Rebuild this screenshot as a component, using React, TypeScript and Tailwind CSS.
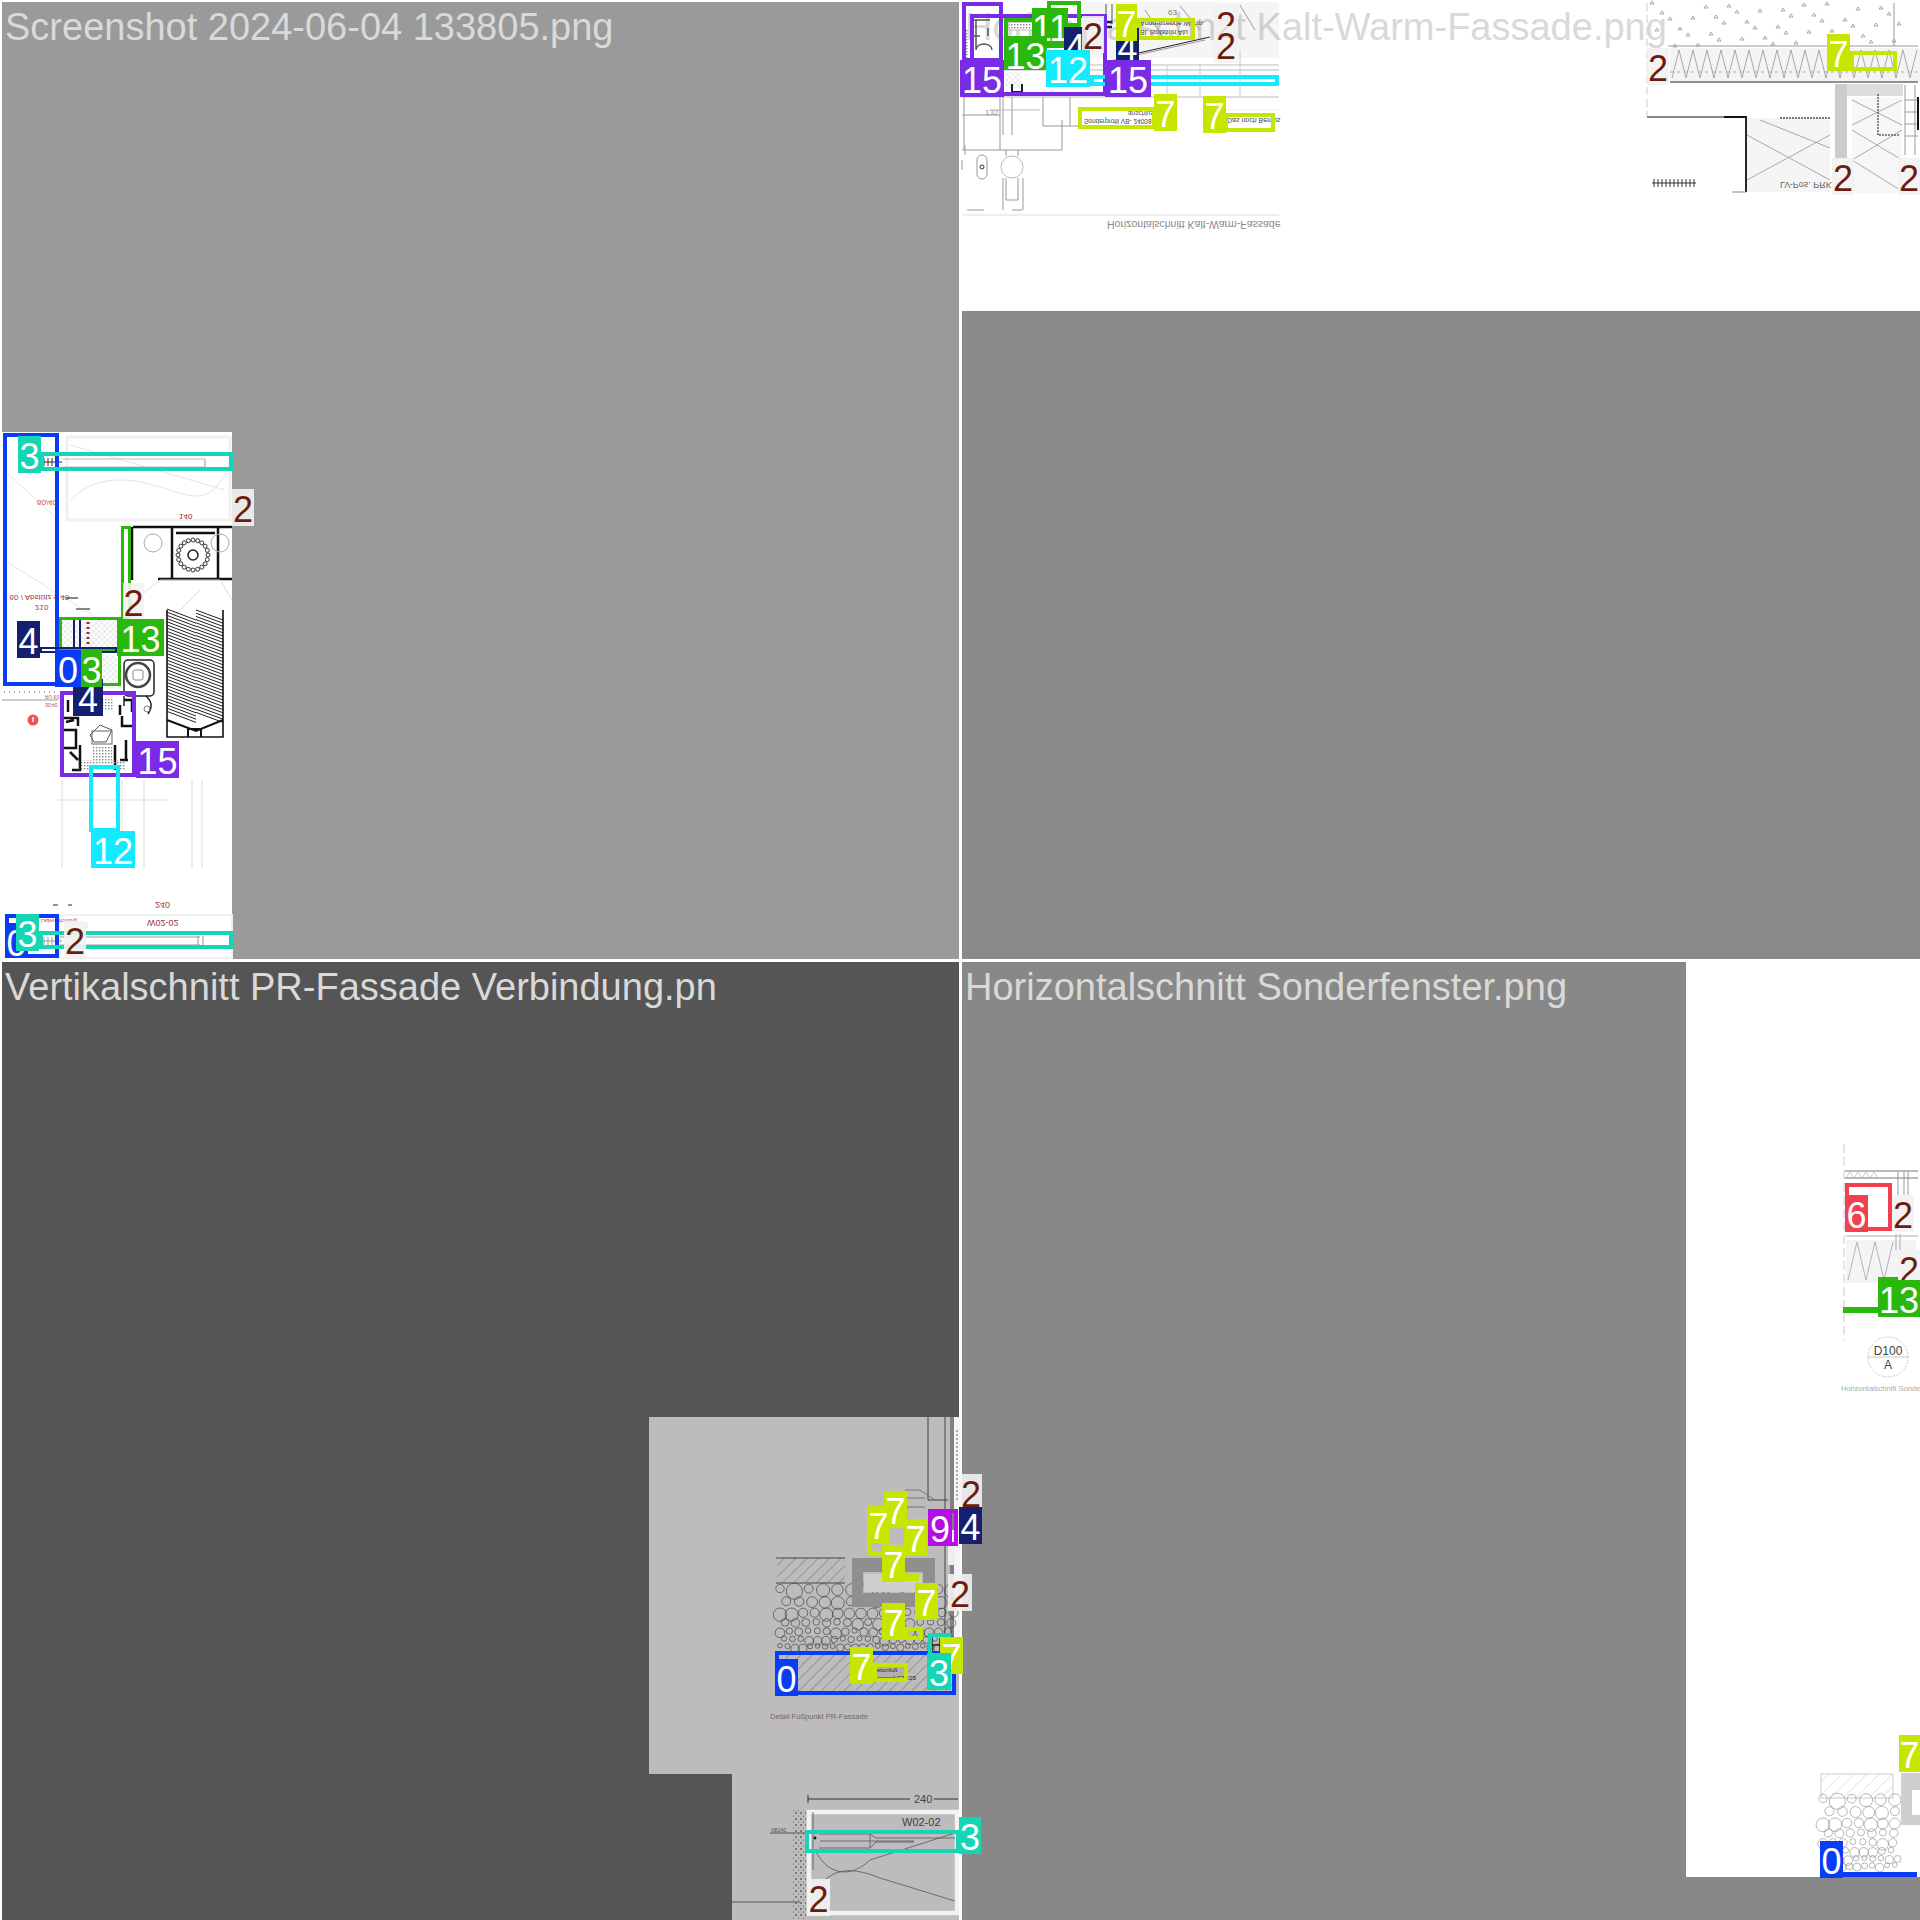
const FONT = "font-['Liberation_Sans',Arial,sans-serif]";

type Tag = { x: number; y: number; t: string; c: string; w?: number; h?: number };
type Frame = { x: number; y: number; w: number; h: number; c: string; b?: number };

const BLUE = "bg-[#0a3cf5] text-white";
const TEAL = "bg-[#16d5b4] text-white";
const GREEN = "bg-[#2bb80c] text-white";
const NAVY = "bg-[#14206e] text-white";
const PURPLE = "bg-[#7a2be6] text-white";
const CYAN = "bg-[#12eaff] text-white";
const YELLOW = "bg-[#c6e600] text-white";
const MAGENTA = "bg-[#b40ee6] text-white";
const RED = "bg-[#f2404f] text-white";
const BROWN = "bg-[#f2f2f2]/90 text-[#6b1c0e]";

const B_BLUE = "border-[#0a3cf5]";
const B_TEAL = "border-[#16d5b4]";
const B_GREEN = "border-[#2bb80c]";
const B_NAVY = "border-[#14206e]";
const B_PURPLE = "border-[#7a2be6]";
const B_CYAN = "border-[#12eaff]";
const B_YELLOW = "border-[#c6e600]";
const B_MAGENTA = "border-[#b40ee6]";
const B_RED = "border-[#f2404f]";

// detection boxes, in page pixels
const frames: Frame[] = [
  // top left
  { x: 3, y: 433, w: 56, h: 253, c: B_BLUE },
  { x: 40, y: 452, w: 193, h: 19, c: B_TEAL },
  { x: 121, y: 526, w: 10, h: 94, c: B_GREEN, b: 3 },
  { x: 59, y: 617, w: 62, h: 33, c: B_GREEN, b: 3 },
  { x: 81, y: 650, w: 40, h: 36, c: B_GREEN, b: 3 },
  { x: 40, y: 647, w: 77, h: 6, c: B_NAVY, b: 2 },
  { x: 60, y: 691, w: 76, h: 86, c: B_PURPLE },
  { x: 89, y: 765, w: 31, h: 67, c: B_CYAN },
  { x: 5, y: 914, w: 54, h: 44, c: B_BLUE },
  { x: 39, y: 931, w: 194, h: 18, c: B_TEAL },
  // top right
  { x: 962, y: 2, w: 41, h: 60, c: B_PURPLE },
  { x: 970, y: 14, w: 137, h: 82, c: B_PURPLE },
  { x: 1004, y: 18, w: 44, h: 30, c: B_GREEN },
  { x: 1047, y: 1, w: 34, h: 26, c: B_GREEN },
  { x: 1090, y: 75, w: 189, h: 11, c: B_CYAN },
  { x: 1137, y: 18, w: 58, h: 22, c: B_YELLOW },
  { x: 1078, y: 107, w: 78, h: 22, c: B_YELLOW },
  { x: 1224, y: 113, w: 51, h: 19, c: B_YELLOW },
  { x: 1850, y: 51, w: 47, h: 20, c: B_YELLOW },
  // bottom left
  { x: 775, y: 1651, w: 181, h: 44, c: B_BLUE },
  { x: 928, y: 1509, w: 30, h: 37, c: B_MAGENTA },
  { x: 928, y: 1633, w: 23, h: 24, c: B_TEAL },
  { x: 867, y: 1506, w: 23, h: 49, c: B_YELLOW },
  { x: 873, y: 1663, w: 35, h: 19, c: B_YELLOW },
  { x: 905, y: 1627, w: 18, h: 13, c: B_YELLOW },
  { x: 905, y: 1573, w: 14, h: 8, c: B_YELLOW },
  { x: 805, y: 1830, w: 155, h: 23, c: B_TEAL },
  // bottom right
  { x: 1845, y: 1183, w: 47, h: 48, c: B_RED },
];

const tags: Tag[] = [
  // top left
  { x: 18, y: 436, t: "3", c: TEAL, w: 23 },
  { x: 232, y: 489, t: "2", c: BROWN, w: 22 },
  { x: 123, y: 583, t: "2", c: BROWN, w: 21 },
  { x: 117, y: 619, t: "13", c: GREEN, w: 47 },
  { x: 17, y: 621, t: "4", c: NAVY, w: 23 },
  { x: 73, y: 679, t: "4", c: NAVY, w: 30 },
  { x: 55, y: 650, t: "0", c: BLUE, w: 26 },
  { x: 81, y: 650, t: "3", c: GREEN, w: 21 },
  { x: 136, y: 741, t: "15", c: PURPLE, w: 43 },
  { x: 91, y: 831, t: "12", c: CYAN, w: 44 },
  { x: 5, y: 923, t: "0", c: BLUE, w: 23, h: 35 },
  { x: 16, y: 914, t: "3", c: TEAL, w: 23 },
  { x: 64, y: 921, t: "2", c: BROWN, w: 22 },
  // top right
  { x: 1032, y: 8, t: "11", c: GREEN, w: 36, h: 40 },
  { x: 1004, y: 36, t: "13", c: GREEN, w: 43, h: 34 },
  { x: 1064, y: 27, t: "4", c: NAVY, w: 23, h: 36 },
  { x: 1082, y: 16, t: "2", c: BROWN, w: 22 },
  { x: 1046, y: 50, t: "12", c: CYAN, w: 44 },
  { x: 960, y: 60, t: "15", c: PURPLE, w: 44 },
  { x: 1116, y: 28, t: "4", c: NAVY, w: 23, h: 36 },
  { x: 1105, y: 60, t: "15", c: PURPLE, w: 46 },
  { x: 1116, y: 4, t: "7", c: YELLOW, w: 21 },
  { x: 1214, y: 5, t: "2", c: BROWN, w: 24 },
  { x: 1214, y: 26, t: "2", c: BROWN, w: 24 },
  { x: 1154, y: 94, t: "7", c: YELLOW, w: 23 },
  { x: 1203, y: 96, t: "7", c: YELLOW, w: 23 },
  { x: 1647, y: 48, t: "2", c: BROWN, w: 22 },
  { x: 1827, y: 34, t: "7", c: YELLOW, w: 23 },
  { x: 1832, y: 158, t: "2", c: BROWN, w: 22 },
  { x: 1898, y: 158, t: "2", c: BROWN, w: 22 },
  // bottom left
  { x: 884, y: 1491, t: "7", c: YELLOW, w: 23 },
  { x: 867, y: 1506, t: "7", c: YELLOW, w: 23 },
  { x: 904, y: 1519, t: "7", c: YELLOW, w: 23 },
  { x: 882, y: 1545, t: "7", c: YELLOW, w: 23 },
  { x: 915, y: 1583, t: "7", c: YELLOW, w: 23 },
  { x: 882, y: 1603, t: "7", c: YELLOW, w: 23 },
  { x: 940, y: 1637, t: "7", c: YELLOW, w: 23 },
  { x: 850, y: 1647, t: "7", c: YELLOW, w: 23 },
  { x: 960, y: 1474, t: "2", c: BROWN, w: 22 },
  { x: 959, y: 1507, t: "4", c: NAVY, w: 23 },
  { x: 928, y: 1509, t: "9", c: MAGENTA, w: 24 },
  { x: 948, y: 1574, t: "2", c: BROWN, w: 24 },
  { x: 927, y: 1653, t: "3", c: TEAL, w: 24 },
  { x: 775, y: 1659, t: "0", c: BLUE, w: 23 },
  { x: 959, y: 1817, t: "3", c: TEAL, w: 22 },
  { x: 807, y: 1879, t: "2", c: BROWN, w: 23 },
  // bottom right
  { x: 1845, y: 1195, t: "6", c: RED, w: 23 },
  { x: 1892, y: 1195, t: "2", c: BROWN, w: 22 },
  { x: 1898, y: 1250, t: "2", c: BROWN, w: 22 },
  { x: 1878, y: 1280, t: "13", c: GREEN, w: 42 },
  { x: 1899, y: 1735, t: "7", c: YELLOW, w: 21 },
  { x: 1820, y: 1841, t: "0", c: BLUE, w: 23 },
];

const bars = [
  { x: 1878, y: 1277, w: 21, h: 4, c: "bg-[#2bb80c]" },
  { x: 1843, y: 1307, w: 35, h: 6, c: "bg-[#2bb80c]" },
  { x: 1843, y: 1872, w: 74, h: 5, c: "bg-[#0a3cf5]" },
];

// round pebbles for the gravel bed, same seed every run
function pebbles(x0: number, y0: number, x1: number, y1: number) {
  const out: { x: number; y: number; r: number }[] = [];
  let y = y0;
  let row = 0;
  while (y < y1) {
    const t = (y - y0) / (y1 - y0);
    const base = 7 - t * 3.5;
    let x = x0 + (row % 2) * base;
    let i = 0;
    while (x < x1) {
      const n = Math.abs(Math.sin(i * 12.9898 + row * 78.233) * 43758.5453) % 1;
      const r = base * (0.6 + n * 0.6);
      out.push({ x, y: y + (n - 0.5) * 3, r });
      x += base * 2.05;
      i++;
    }
    y += base * 1.75;
    row++;
  }
  return out;
}

function zigzag(x0: number, x1: number, top: number, bottom: number, step: number) {
  let d = `M${x0} ${bottom}`;
  let up = true;
  for (let x = x0 + step; x <= x1; x += step) {
    d += ` L${x} ${up ? top : bottom}`;
    up = !up;
  }
  return d;
}

// text of the drawings that came out mirrored, y is the middle of the line
function FlipText({ x, y, size, fill, children }: { x: number; y: number; size: number; fill: string; children: string }) {
  return (
    <text transform={`translate(${x} ${y - size * 0.36}) scale(1 -1)`} fontSize={size} fill={fill} stroke="none">
      {children}
    </text>
  );
}

function Louvers() {
  const rows = Array.from({ length: 33 }, (_, i) => 609 + i * 3.2);
  return (
    <g fill="none">
      {rows.map((y) => (
        <path key={y} d={`M167 ${y} L196 ${y + 11} M196 ${y + 1} L223 ${y + 11}`} stroke="#222" strokeWidth="1" />
      ))}
      <path d="M167 610V737H223V610" stroke="#111" strokeWidth="1.6" />
      <path d="M167 720L196 731L223 720M188 737V729H201V737" stroke="#111" strokeWidth="2" />
    </g>
  );
}

function TopLeftDrawing() {
  const dots = Array.from({ length: 20 }, (_, i) => (i * Math.PI) / 10);
  return (
    <g>
      <rect x="67" y="437" width="163" height="83" fill="#fff" stroke="#f0f0f0" strokeWidth="3" />
      <path d="M70 445L225 490M70 500C100 470 140 480 170 490S210 500 228 470M4 470L58 520M4 560L100 620" stroke="#e4e4e4" fill="none" />
      <path d="M62 459H205V467H62M205 459V467" stroke="#bbb" fill="none" />
      <path d="M40 462H62M44 458V466M48 458V466M52 458V466M56 458V466" stroke="#333" />
      <FlipText x={37} y={503} size={8} fill="#b8565a">60/40</FlipText>
      <FlipText x={179} y={517} size={8} fill="#8c2f2f">140</FlipText>
      <FlipText x={3} y={598} size={8} fill="#a83a3a">≤ 60 / Abstütz ≤ 40</FlipText>
      <FlipText x={35} y={608} size={8} fill="#a83a3a">210</FlipText>
      <path d="M66 598H78M76 609H90" stroke="#111" />
      {/* top profile */}
      <path d="M133 527H232M132 527V580" stroke="#111" strokeWidth="2.5" fill="none" />
      <path d="M172 528V578M218 528V578M158 579H232M176 533H215" stroke="#111" strokeWidth="2.5" fill="none" />
      <circle cx="153" cy="543" r="9" fill="none" stroke="#aaa" />
      <circle cx="220" cy="543" r="9" fill="none" stroke="#aaa" />
      {dots.map((a) => (
        <circle key={a} cx={193 + 15 * Math.cos(a)} cy={555 + 15 * Math.sin(a)} r="2" fill="none" stroke="#333" />
      ))}
      <circle cx="193" cy="555" r="5" fill="none" stroke="#222" strokeWidth="1.5" />
      <path d="M135 600L160 580H220L232 600M170 620L200 590" stroke="#ddd" fill="none" />
      <Louvers />
      {/* hatched glazing */}
      <rect x="62" y="620" width="57" height="27" fill="url(#cross)" />
      <rect x="103" y="655" width="16" height="29" fill="url(#cross)" />
      <path d="M74 620V647M80 620V647" stroke="#14206e" strokeWidth="2" />
      <path d="M88 622V646" stroke="#8c2f2f" strokeWidth="3" strokeDasharray="2 3" />
      {/* motor */}
      <rect x="124" y="660" width="30" height="36" rx="4" fill="#fff" stroke="#222" strokeWidth="1.5" />
      <circle cx="138" cy="675" r="12" fill="none" stroke="#444" strokeWidth="2.5" />
      <rect x="133" y="670" width="10" height="10" rx="2" fill="none" stroke="#888" />
      <path d="M146 696C152 702 153 706 148 714M124 696V706" stroke="#222" strokeWidth="1.5" fill="none" />
      <circle cx="147" cy="709" r="3" fill="none" stroke="#777" />
      {/* floor band */}
      <path d="M2 700H58" stroke="#999" />
      <path d="M4 692H58" stroke="#aaa" strokeDasharray="1 4" strokeWidth="2" />
      <FlipText x={45} y={697} size={5} fill="#b8565a">RU 60</FlipText>
      <FlipText x={45} y={705} size={5} fill="#b8565a">30/40</FlipText>
      <circle cx="33" cy="720" r="5.5" fill="#ef5350" />
      <path d="M33 717V722" stroke="#fff" strokeWidth="1.5" />
      {/* frame section */}
      <rect x="102" y="697" width="11" height="14" fill="url(#dotty)" />
      <path d="M68 700V712M124 700H132V712M120 705V715M64 718H78V726M64 730H76V748H64M126 740V760M80 745V770H72M115 745V770M120 760H128M122 716V726H132M66 722L74 720M70 752L78 760" stroke="#111" strokeWidth="2.5" fill="none" />
      <path d="M90 735L100 725L112 730L106 742H94Z" fill="#fff" stroke="#555" />
      <rect x="92" y="731" width="20" height="13" fill="none" stroke="#666" />
      <rect x="92" y="746" width="20" height="14" fill="url(#dotty)" />
      <rect x="78" y="760" width="48" height="10" fill="url(#dotty)" />
      {/* lines going down */}
      <path d="M62 780V868M122 780V868M144 780V868M192 780V868M202 780V868M58 800H168" stroke="#ddd" fill="none" />
      <path d="M53 905H58M68 905H72" stroke="#222" />
      <FlipText x={155} y={905} size={9} fill="#a83a3a">240</FlipText>
      <rect x="60" y="915" width="172" height="43" fill="#fff" stroke="#f0f0f0" strokeWidth="2" />
      <FlipText x={147} y={923} size={9} fill="#9a3a3a">W02-02</FlipText>
      <FlipText x={41} y={921} size={5} fill="#c45">Ladevorrichtung</FlipText>
      <rect x="66" y="922" width="22" height="6" fill="#eee" />
      <path d="M40 941H62M44 937V945M48 937V945M52 937V945M60 937H200M60 945H200M198 936V947M203 936V947" stroke="#999" fill="none" />
    </g>
  );
}

function TopRightDrawing() {
  const specks = Array.from({ length: 44 }, (_, i) => ({
    x: 1650 + ((i * 67) % 250),
    y: 4 + ((i * 37) % 44),
  }));
  return (
    <g fill="none">
      <path d="M972 20H990M976 20V50C976 42 992 42 992 50M970 36H980M988 28V36" stroke="#555" strokeWidth="1.5" />
      <rect x="964" y="30" width="5" height="30" fill="url(#dotty)" />
      <rect x="1009" y="22" width="24" height="8" fill="#fff" stroke="#bbb" />
      <rect x="1009" y="22" width="24" height="8" fill="url(#dotty)" />
      <rect x="1005" y="72" width="16" height="16" fill="url(#cross)" />
      <path d="M1012 84V92H1022V84" stroke="#222" strokeWidth="2" />
      <rect x="1082" y="2" width="197" height="56" fill="#000" fillOpacity="0.04" />
      <path d="M1105 62L1205 40M1145 10L1165 40M1180 6L1200 30M1240 5L1255 30" stroke="#999" />
      <path d="M1134 54L1210 37" stroke="#222" />
      <text x="1168" y="15" fontSize="8" fill="#777" stroke="none">63</text>
      <path d="M1106 4V24M1112 4V24" stroke="#555" />
      <path d="M1105 22H1112M1105 27H1112" stroke="#14206e" strokeWidth="2.5" />
      <FlipText x={1140} y={24} size={7} fill="#444">Angrenzende Warm-</FlipText>
      <FlipText x={1140} y={33} size={7} fill="#444">Bl. Isolation Alu</FlipText>
      <FlipText x={1128} y={113} size={6.5} fill="#555">anschluss</FlipText>
      <FlipText x={1084} y={121} size={6.5} fill="#444">Sonderprofil VB- 24008</FlipText>
      <FlipText x={1227} y={121} size={7} fill="#444">Das noch Bemus</FlipText>
      <path d="M1200 110H1279" stroke="#eee" />
      {/* lines across */}
      <path d="M962 65H1279M962 70H1279M962 97H1279" stroke="#bbb" />
      <path d="M1240 50V97M1167 65V97M1200 65V97" stroke="#ccc" />
      <path d="M962 115H1000M964 97V150M1000 97V150M1003 97V135M1012 97V135M1043 97V126H1105M1070 97V126M962 150H1062M1062 150V120M965 145V155" stroke="#999" />
      <path d="M990 110H1040" stroke="#bbb" />
      <text x="985" y="115" fontSize="8" fill="#999" stroke="none">132</text>
      <rect x="977" y="155" width="10" height="24" rx="5" stroke="#999" />
      <circle cx="982" cy="167" r="2" stroke="#333" />
      <circle cx="1012" cy="167" r="11" stroke="#bbb" />
      <path d="M1006 150V156M1018 150V156M1006 178V200H1018V178M1003 178V210M1023 178V210M967 210H984M1012 210H1022M962 160V170" stroke="#999" />
      <path d="M962 215H1279" stroke="#ddd" />
      <FlipText x={1107} y={225} size={10.5} fill="#8a8a8a">Horizontalschnitt Kalt-Warm-Fassade</FlipText>
      {/* right sheet */}
      {specks.map((s, i) => (
        <path key={i} d={`M${s.x} ${s.y}l2 -3l2 3z`} stroke="#888" strokeWidth="0.7" />
      ))}
      <path d="M1668 46H1918M1894 3V46" stroke="#999" />
      <rect x="1670" y="48" width="250" height="33" fill="#f4f4f4" />
      <path d={zigzag(1672, 1920, 50, 78, 7)} stroke="#888" strokeWidth="0.7" />
      <path d="M1670 72H1918" stroke="#aaa" strokeDasharray="3 4" />
      <path d="M1670 82H1918" stroke="#222" strokeWidth="1.2" />
      <path d="M1647 3V116" stroke="#ccc" strokeDasharray="8 4" />
      <path d="M1647 117H1724" stroke="#888" strokeWidth="2" />
      <path d="M1724 117H1746V192" stroke="#111" strokeWidth="1.8" />
      <path d="M1732 192H1746" stroke="#888" />
      <rect x="1747" y="118" width="83" height="74" fill="#f5f5f5" />
      <path d="M1747 180L1830 135M1747 135L1830 180M1760 120L1830 148" stroke="#888" strokeWidth="0.7" />
      <rect x="1835" y="84" width="68" height="12" fill="#ddd" />
      <rect x="1835" y="84" width="12" height="75" fill="#ccc" />
      <rect x="1852" y="98" width="50" height="95" fill="#f7f7f7" />
      <path d="M1852 100L1902 125M1902 100L1852 125M1852 130L1902 160M1902 130L1852 160M1852 160L1900 190" stroke="#888" strokeWidth="0.7" />
      <path d="M1878 94V135H1900" stroke="#666" strokeWidth="1.6" strokeDasharray="2 1" />
      <path d="M1905 85V155M1915 85V155M1905 100H1918M1905 112H1918M1905 124H1918M1905 136H1918" stroke="#999" />
      <path d="M1918 97V130" stroke="#111" strokeWidth="2" />
      <path d="M1780 118H1830" stroke="#777" strokeWidth="2" strokeDasharray="2 1" />
      <path d="M1652 183H1696M1654 179V187M1658 179V187M1662 179V187M1666 179V187M1670 179V187M1674 179V187M1678 179V187M1682 179V187M1686 179V187M1690 179V187M1694 179V187" stroke="#333" />
      <FlipText x={1780} y={185} size={9} fill="#666">LV-Pos. PRK 2</FlipText>
    </g>
  );
}

function BottomLeftDrawing() {
  const stones = pebbles(780, 1590, 955, 1650);
  return (
    <g fill="none">
      <path d="M928 1417V1500H948M945 1417V1640M951 1417V1650M953 1417V1650" stroke="#444" />
      <rect x="954" y="1417" width="6" height="230" fill="#f4f4f4" />
      <path d="M957 1430V1500" stroke="#666" strokeDasharray="2 2" />
      <rect x="948" y="1530" width="7" height="35" fill="#eee" />
      <path d="M905 1490H920L935 1500M900 1498H925M900 1507H925" stroke="#777" />
      {stones.map((s, i) => (
        <circle key={i} cx={s.x} cy={s.y} r={s.r} stroke="#333" strokeWidth="0.6" />
      ))}
      <rect x="777" y="1558" width="68" height="25" fill="#bcbcbc" />
      <rect x="777" y="1558" width="68" height="25" fill="url(#hatch)" />
      <path d="M776 1558H845M776 1583H845" stroke="#444" />
      <path d="M852 1558H935V1607H852Z M863 1572V1593H923V1572Z" fill="#8f8f8f" fillRule="evenodd" />
      <path d="M864 1574H922V1592H864Z" fill="#cfcfcf" />
      <rect x="779" y="1655" width="173" height="36" fill="#bcbcbc" />
      <rect x="779" y="1655" width="173" height="36" fill="url(#hatch)" />
      <rect x="873" y="1664" width="35" height="18" fill="#b0b0b0" />
      <text x="873" y="1672" fontSize="6" fill="#222" stroke="none">Betonfuß</text>
      <text x="873" y="1680" fontSize="6" fill="#222" stroke="none">Bestand C20/25</text>
      <path d="M932 1638V1652M940 1638V1652M932 1645H940" stroke="#222" strokeWidth="1.5" />
      <text x="770" y="1719" fontSize="7.6" fill="#6a6a6a" stroke="none">Detail Fußpunkt PR-Fassade</text>
      {/* lower sheet */}
      <path d="M808 1799H910M934 1799H958M808 1795V1803" stroke="#333" />
      <text x="914" y="1803" fontSize="11" fill="#444" stroke="none">240</text>
      <rect x="793" y="1810" width="13" height="110" fill="url(#speck)" />
      <rect x="809" y="1812" width="148" height="101" stroke="#f2f2f2" strokeWidth="4.5" />
      <text x="902" y="1826" fontSize="11" fill="#3e3e3e" stroke="none">W02-02</text>
      <path d="M770 1833H805M732 1902H800" stroke="#555" />
      <text x="771" y="1832" fontSize="5" fill="#555" stroke="none">NB240</text>
      <path d="M813 1812V1870M819 1834H870V1848H819M870 1834L876 1838H955M870 1848L876 1842H914M820 1841H914M815 1850C830 1880 855 1875 870 1860L955 1833M825 1880C840 1866 860 1870 880 1878L955 1901" stroke="#555" strokeWidth="0.8" />
      <circle cx="815" cy="1838" r="1.4" fill="#111" stroke="none" />
    </g>
  );
}

function BottomRightDrawing() {
  const stones = pebbles(1823, 1800, 1900, 1870);
  return (
    <g fill="none">
      <path d="M1844 1144V1340" stroke="#ccc" strokeDasharray="9 4" />
      <path d="M1845 1171H1918M1845 1178H1918" stroke="#777" />
      <path d="M1898 1171V1195M1904 1171V1195M1908 1171V1195" stroke="#999" />
      <path d={zigzag(1846, 1880, 1172, 1178, 4)} stroke="#aaa" strokeWidth="0.6" />
      <rect x="1846" y="1240" width="70" height="43" fill="#f4f4f4" />
      <path d={zigzag(1848, 1900, 1242, 1280, 9)} stroke="#999" strokeWidth="0.7" />
      <path d="M1896 1234V1250M1900 1234V1250M1846 1236H1918" stroke="#aaa" />
      <circle cx="1888" cy="1357" r="20" stroke="#bbb" strokeDasharray="1.5 1.5" />
      <path d="M1868 1357H1908" stroke="#ccc" />
      <text x="1888" y="1355" textAnchor="middle" fontSize="12" fill="#444" stroke="none">D100</text>
      <text x="1888" y="1369" textAnchor="middle" fontSize="12" fill="#444" stroke="none">A</text>
      <text x="1841" y="1391" fontSize="7.5" fill="#aaa" stroke="none">Horizontalschnitt Sonderfenster</text>
      <rect x="1821" y="1774" width="72" height="24" fill="url(#hatchLight)" stroke="#ccc" />
      {stones.map((s, i) => (
        <circle key={i} cx={s.x} cy={s.y} r={s.r} stroke="#888" strokeWidth="0.6" />
      ))}
      <path d="M1901 1773H1920V1825H1901Z" fill="#cfcfcf" />
      <path d="M1912 1790H1920V1815H1912Z" fill="#fff" />
    </g>
  );
}

function Sheet() {
  return (
    <svg className="absolute inset-0" width="1920" height="1920" viewBox="0 0 1920 1920">
      <defs>
        <pattern id="hatch" width="8" height="8" patternUnits="userSpaceOnUse" patternTransform="rotate(45)">
          <path d="M0 0V8" stroke="#5a5a5a" strokeWidth="0.8" />
        </pattern>
        <pattern id="hatchLight" width="9" height="9" patternUnits="userSpaceOnUse" patternTransform="rotate(45)">
          <path d="M0 0V9" stroke="#c4c4c4" strokeWidth="0.8" />
        </pattern>
        <pattern id="cross" width="4" height="4" patternUnits="userSpaceOnUse" patternTransform="rotate(45)">
          <path d="M0 0V4M0 0H4" stroke="#bbb" strokeWidth="0.6" />
        </pattern>
        <pattern id="dotty" width="3" height="3" patternUnits="userSpaceOnUse">
          <rect width="1.4" height="1.4" fill="#888" />
        </pattern>
        <pattern id="speck" width="5" height="6" patternUnits="userSpaceOnUse">
          <circle cx="1" cy="1" r="0.8" fill="#222" />
          <circle cx="3.5" cy="4" r="0.5" fill="#444" />
        </pattern>
      </defs>
      <TopLeftDrawing />
      <TopRightDrawing />
      <BottomLeftDrawing />
      <BottomRightDrawing />
    </svg>
  );
}

function Title({ children }: { children: string }) {
  return (
    <p className="absolute left-[3px] top-[3px] text-[38px] leading-[44px] text-[#d9d9d9] whitespace-nowrap overflow-hidden max-w-full">
      {children}
    </p>
  );
}

export default function App() {
  return (
    <div className={`relative w-[1920px] h-[1920px] overflow-hidden bg-white ${FONT}`}>
      <div className="grid grid-cols-[957px_958px] grid-rows-[957px_958px] gap-[3px] pl-[2px] pt-[2px]">
        <div className="relative flex items-end bg-[#9a9a9a]">
          <div className="w-[230px] h-[527px] bg-white" />
          <Title>Screenshot 2024-06-04 133805.png</Title>
        </div>
        <div className="relative flex flex-col bg-[#8a8a8a]">
          <div className="h-[309px] bg-white" />
          <Title>Horizontalschnitt Kalt-Warm-Fassade.png</Title>
        </div>
        <div className="relative flex flex-col items-end justify-end bg-[#555555]">
          <div className="w-[310px] h-[357px] bg-[#bcbcbc]" />
          <div className="w-[227px] h-[146px] bg-[#bcbcbc]" />
          <Title>Vertikalschnitt PR-Fassade Verbindung.pn</Title>
        </div>
        <div className="relative flex justify-end bg-[#888888]">
          <div className="w-[234px] h-[915px] bg-white" />
          <Title>Horizontalschnitt Sonderfenster.png</Title>
        </div>
      </div>
      <Sheet />
      {frames.map((f, i) => (
        <div
          key={i}
          className={`absolute border-solid ${f.c}`}
          style={{ left: f.x, top: f.y, width: f.w, height: f.h, borderWidth: f.b ?? 4 }}
        />
      ))}
      {bars.map((b, i) => (
        <div key={i} className={`absolute ${b.c}`} style={{ left: b.x, top: b.y, width: b.w, height: b.h }} />
      ))}
      {tags.map((g, i) => (
        <div
          key={i}
          className={`absolute text-center text-[36px] leading-[37px] pt-[2px] ${g.h ? "overflow-hidden" : ""} ${g.c}`}
          style={{ left: g.x, top: g.y, width: g.w, height: g.h ?? 37 }}
        >
          {g.t}
        </div>
      ))}
    </div>
  );
}
